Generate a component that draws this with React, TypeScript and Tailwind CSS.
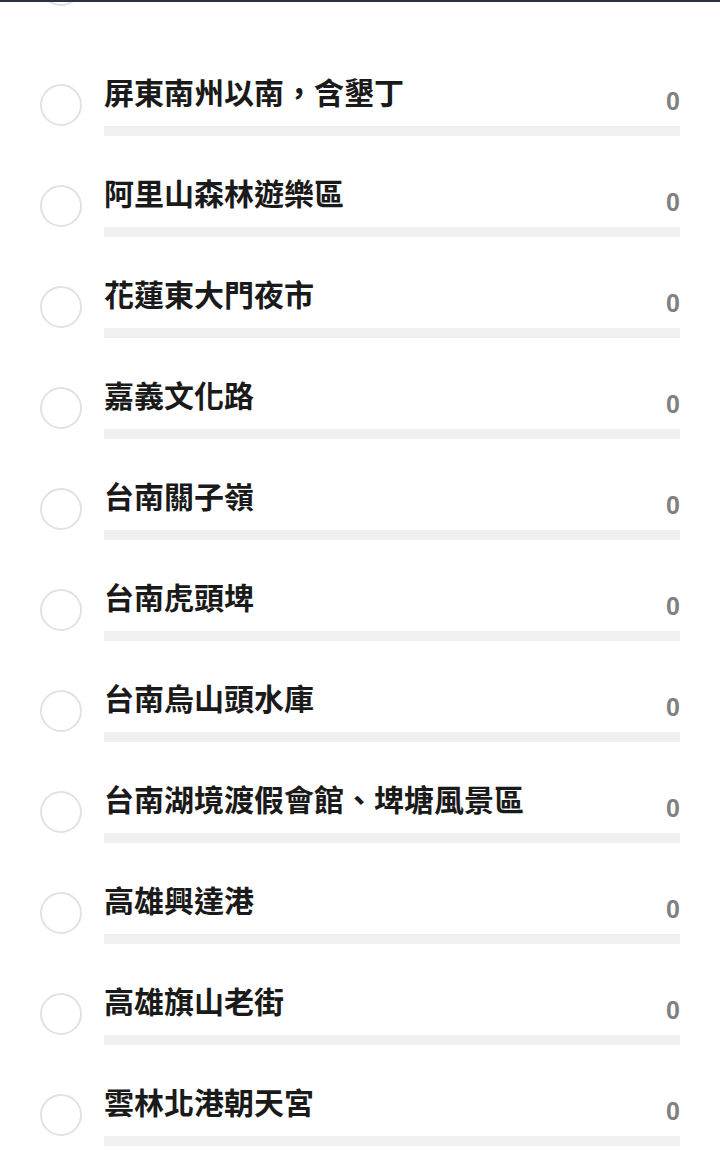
import React from "react";

const places = [
  "屏東南州以南，含墾丁",
  "阿里山森林遊樂區",
  "花蓮東大門夜市",
  "嘉義文化路",
  "台南關子嶺",
  "台南虎頭埤",
  "台南烏山頭水庫",
  "台南湖境渡假會館、埤塘風景區",
  "高雄興達港",
  "高雄旗山老街",
  "雲林北港朝天宮",
];

function PlaceRow({ name, count }: { name: string; count: number }) {
  return (
    <div className="flex items-start h-[101px]">
      <div className="ml-[40px] mt-[18px] w-[42px] h-[42px] shrink-0 rounded-full border-2 border-[#e2e2e2]" />
      <div className="ml-[22px] mr-[40px] flex-1 pt-[5px]">
        <div className="flex items-start justify-between">
          <span
            className="text-[30px] leading-[40px] font-bold text-[#1a1a1a]"
            style={{ fontFamily: '"Noto Sans CJK TC", "Noto Sans", sans-serif' }}
          >
            {name}
          </span>
          <span
            className="mt-[15px] text-[25px] leading-[30px] font-bold text-[#808080]"
            style={{ fontFamily: '"Liberation Sans", Arial, sans-serif' }}
          >
            {count}
          </span>
        </div>
        <div className="mt-[10px] h-[10px] bg-[#f0f0f0]" />
      </div>
    </div>
  );
}

export default function App() {
  return (
    <div className="w-[720px] h-[1151px] overflow-hidden bg-white">
      <div className="h-[2px] bg-[#2b3245]" />
      <div className="h-[64px] overflow-hidden pl-[40px]">
        <div className="-mt-[38px] w-[42px] h-[42px] rounded-full border-2 border-[#e2e2e2]" />
      </div>
      {places.map((p) => (
        <PlaceRow key={p} name={p} count={0} />
      ))}
    </div>
  );
}
